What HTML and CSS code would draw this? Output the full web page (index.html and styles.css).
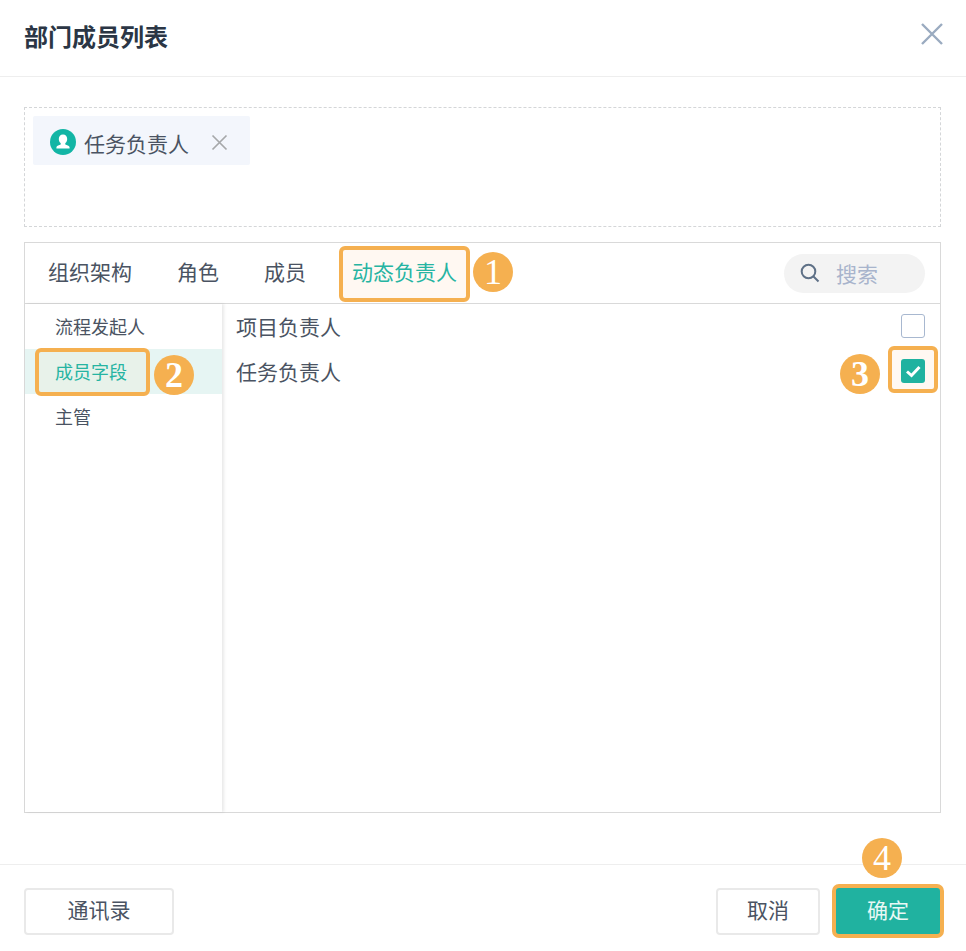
FILE: index.html
```html
<!DOCTYPE html>
<html lang="zh">
<head>
<meta charset="utf-8">
<title>部门成员列表</title>
<link rel="stylesheet" href="styles.css">
</head>
<body>
<div class="dialog">
  <header class="head">
    <h1 class="title">部门成员列表</h1>
    <svg class="close" width="26" height="26" viewBox="0 0 26 26"><path d="M3 3L23 23M23 3L3 23" fill="none" stroke="#9aabc0" stroke-width="2.4"/></svg>
  </header>
  <main class="body">
    <div class="picked">
      <div class="chip">
        <svg class="avatar" width="26" height="26" viewBox="0 0 26 26"><circle cx="13" cy="13" r="13" fill="#12b5a5"/><path d="M13 5.500c2.600 0 4.200 2 4.200 4.500 0 1.900-.8 3.300-1.900 4.100v1.400c1.700.6 3.600 1.200 4.100 2.300.2.400.2 1 .2 1.700H6.400c0-.7 0-1.300.2-1.700.5-1.100 2.400-1.700 4.100-2.300v-1.400c-1.100-.8-1.900-2.200-1.900-4.100 0-2.500 1.600-4.500 4.200-4.500z" fill="#fff"/></svg>
        <span class="chip-text">任务负责人</span>
        <svg class="chip-x" width="17" height="17" viewBox="0 0 17 17"><path d="M1.500 1.500L15.500 15.500M15.500 1.500L1.500 15.500" fill="none" stroke="#a6a8aa" stroke-width="1.700"/></svg>
      </div>
    </div>
    <section class="panel">
      <div class="tabs">
        <span class="tab">组织架构</span>
        <span class="tab">角色</span>
        <span class="tab">成员</span>
        <span class="tab tab-active">动态负责人
          <span class="mark mark-tab"></span>
          <span class="num num-1">1</span>
        </span>
        <div class="search">
          <svg class="search-icon" width="22" height="22" viewBox="0 0 22 22"><circle cx="9.500" cy="9.500" r="6.800" fill="none" stroke="#5f7187" stroke-width="2"/><path d="M14.500 14.500L19.500 19.500" stroke="#5f7187" stroke-width="2" fill="none"/></svg>
          <span class="search-text">搜索</span>
        </div>
      </div>
      <div class="content">
        <aside class="side">
          <div class="side-row">流程发起人</div>
          <div class="side-row side-active">成员字段
            <span class="mark mark-side"></span>
            <span class="num num-2">2</span>
          </div>
          <div class="side-row">主管</div>
        </aside>
        <div class="list">
          <div class="row">
            <span>项目负责人</span>
            <span class="check"></span>
          </div>
          <div class="row">
            <span>任务负责人</span>
            <span class="check-wrap">
              <span class="mark mark-check"></span>
              <svg class="check-on" width="24" height="24" viewBox="0 0 24 24"><rect width="24" height="24" rx="3" fill="#20b2a0"/><path d="M6 12.500L10.500 16.500L18.500 8" fill="none" stroke="#fff" stroke-width="3"/></svg>
              <span class="num num-3">3</span>
            </span>
          </div>
        </div>
      </div>
    </section>
  </main>
  <footer class="foot">
    <button class="btn btn-wide">通讯录</button>
    <div class="foot-right">
      <button class="btn">取消</button>
      <button class="btn btn-primary">确定
        <span class="num num-4">4</span>
      </button>
    </div>
  </footer>
</div>
</body>
</html>
```
FILE: styles.css
```css
* { box-sizing: border-box; }
html, body { margin: 0; padding: 0; background: #fff; }
body {
  width: 966px;
  height: 951px;
  overflow: hidden;
  font-family: "Noto Sans CJK SC", "Noto Sans", sans-serif;
  color: #4a5362;
}
.dialog { width: 966px; height: 951px; display: flex; flex-direction: column; }
.head {
  height: 77px;
  flex: none;
  display: flex;
  align-items: center;
  justify-content: space-between;
  padding: 0 21px 5px 24px;
  border-bottom: 1px solid #eeeeee;
}
.title { margin: 0; font-size: 24px; font-weight: 700; line-height: 34px; color: #2b3645; }
.close { display: block; margin-bottom: 4px; }
.body { flex: 1; padding: 30px 25px 0 24px; display: flex; flex-direction: column; }
.picked {
  height: 120px;
  border: 1px dashed #d4d6d8;
  padding: 8px;
  margin-bottom: 15px;
  flex: none;
}
.chip {
  width: 217px;
  height: 49px;
  background: #f3f6fc;
  border-radius: 2px;
  display: flex;
  align-items: center;
  padding-left: 17px;
}
.avatar { flex: none; margin-top: 3px; }
.chip-text { font-size: 21px; line-height: 30px; margin: 5px 0 0 8px; }
.chip-x { margin: 3px 0 0 22px; }
.panel {
  height: 571px;
  flex: none;
  border: 1px solid #d9d9d9;
  display: flex;
  flex-direction: column;
}
.tabs {
  height: 61px;
  flex: none;
  display: flex;
  align-items: center;
  padding: 0 15px 0 23px;
  gap: 45px;
  border-bottom: 1px solid #d9d9d9;
  font-size: 21px;
}
.tab { position: relative; line-height: 30px; white-space: nowrap; margin-bottom: 4px; }
.tab-active { color: #26b4a2; z-index: 0; margin-left: 1px; }
.search {
  margin-left: auto;
  width: 141px;
  height: 39px;
  border-radius: 20px;
  background: #f3f3f3;
  display: flex;
  align-items: center;
  padding-left: 15px;
  gap: 15px;
}
.search-icon { flex: none; }
.search-text { color: #a8b4cc; font-size: 21px; line-height: 30px; }
.content { flex: 1; display: flex; min-height: 0; }
.side {
  width: 197px;
  flex: none;
  box-shadow: 2px 0 3px rgba(0, 0, 0, 0.09);
  font-size: 18px;
}
.side-row { position: relative; height: 45px; line-height: 45px; padding-left: 30px; }
.side-active { background: #e6f5f3; color: #26b4a2; z-index: 0; }
.list { flex: 1; padding: 0 15px 0 14px; font-size: 21px; }
.row { height: 45px; display: flex; align-items: center; justify-content: space-between; padding-bottom: 2px; }
.check {
  width: 24px;
  height: 24px;
  border: 1px solid #a8b8d0;
  border-radius: 3px;
  background: #fff;
  display: block;
}
.check-wrap { position: relative; width: 24px; height: 24px; display: block; z-index: 0; }
.check-on { display: block; }
.mark {
  position: absolute;
  z-index: -1;
  border: 4px solid #f5b050;
  border-radius: 6px;
  background: #fff8f2;
}
.mark-tab { left: -13px; right: -13px; top: -10px; bottom: -16px; }
.mark-side { left: 10px; top: -1px; width: 115px; height: 48px; background: #e8f2ea; }
.mark-check { left: -13px; top: -13px; width: 50px; height: 47px; }
.num {
  position: absolute;
  width: 40px;
  height: 40px;
  border-radius: 50%;
  background: #f5b050;
  color: #fff;
  font-family: "Liberation Serif", serif;
  font-size: 36px;
  font-weight: 400;
  line-height: 40px;
  text-align: center;
}
.num-1 { left: 121px; top: -4px; }
.num-2 { left: 129px; top: 6px; font-weight: 700; }
.num-3 { left: -61px; top: -5px; font-weight: 700; }
.num-4 { left: 26px; top: -50px; }
.foot {
  height: 87px;
  flex: none;
  border-top: 1px solid #eeeeee;
  display: flex;
  justify-content: space-between;
  padding: 23px 22px 0 24px;
}
.foot-right { display: flex; gap: 12px; }
.btn {
  position: relative;
  width: 104px;
  height: 47px;
  border: 2px solid #e9e9e9;
  border-radius: 4px;
  background: #fff;
  font-family: inherit;
  font-size: 21px;
  line-height: 30px;
  color: #4a5362;
  padding: 0 0 5px;
}
.btn-wide { width: 150px; }
.btn-primary {
  width: 112px;
  height: 54px;
  margin-top: -4px;
  border: 4px solid #f5b050;
  border-radius: 7px;
  background: #20b2a0;
  color: #e8f8f5;
}
```
